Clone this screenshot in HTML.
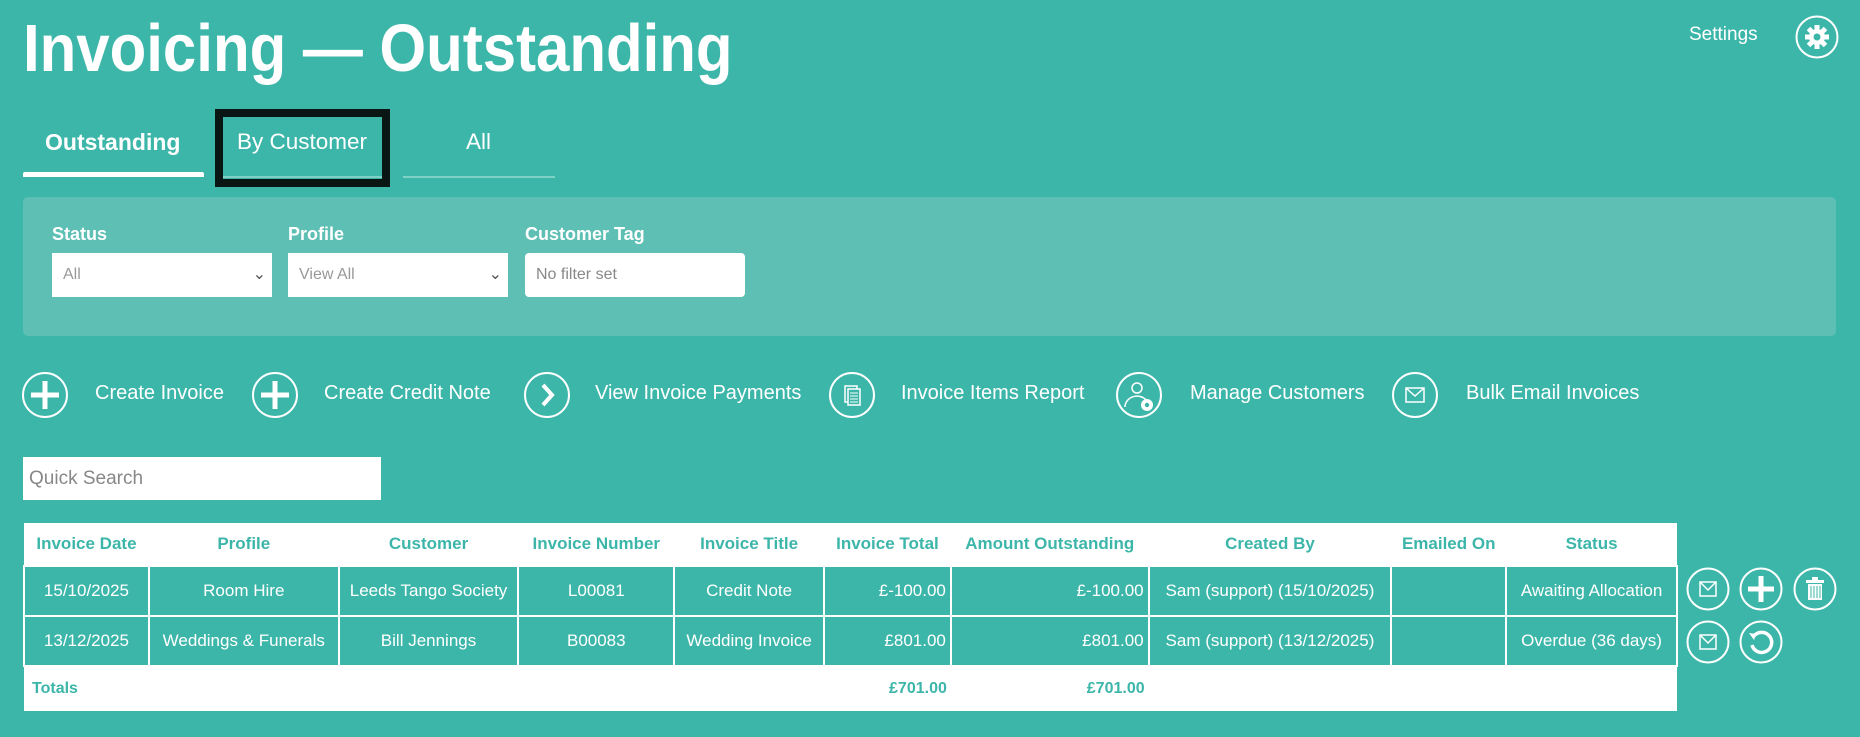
<!DOCTYPE html>
<html><head><meta charset="utf-8"><style>
*{margin:0;padding:0;box-sizing:border-box}
body{width:1860px;height:737px;background:#3db6aa;font-family:"Liberation Sans",sans-serif;color:#fff;position:relative;overflow:hidden}
.a{position:absolute;white-space:nowrap}
h1{position:absolute;left:23px;top:9px;font-size:67px;font-weight:bold;letter-spacing:0;line-height:80px;transform:scaleX(0.895);transform-origin:left top;white-space:nowrap}
.lbl{font-size:18px;font-weight:bold;top:224px}
.sel{position:absolute;top:253px;height:44px;background:#fff;color:#999;font-size:16px;padding:13px 11px}
.act{font-size:20px;top:382px}
svg.ic{position:absolute}
table{position:absolute;left:23px;top:523px;width:1655px;border-collapse:collapse;font-size:17px}
th{background:#fff;color:#3db6aa;font-weight:bold;height:43px;font-size:17px}
td{border:2px solid #fff;height:50px;text-align:center;padding:0 4px}
td.r{text-align:right}
tr.tot td{background:#fff;color:#3db6aa;font-weight:bold;height:45px;border:none;font-size:16px}
</style></head><body>
<h1>Invoicing — Outstanding</h1>
<div class="a" style="left:1689px;top:24px;font-size:19px">Settings</div>
<svg class="ic" style="left:1795px;top:15px" width="44" height="44" viewBox="0 0 44 44"><circle cx="22" cy="22" r="20.5" fill="none" stroke="#fff" stroke-width="2"/><g fill="#fff" transform="translate(22 22)"><circle r="8"/><g id="t"><rect x="-2.5" y="-12" width="5" height="6"/></g><use href="#t" transform="rotate(45)"/><use href="#t" transform="rotate(90)"/><use href="#t" transform="rotate(135)"/><use href="#t" transform="rotate(180)"/><use href="#t" transform="rotate(225)"/><use href="#t" transform="rotate(270)"/><use href="#t" transform="rotate(315)"/></g><circle cx="22" cy="22" r="3.5" fill="#3db6aa"/></svg>

<div class="a" style="left:45px;top:129px;font-size:23px;font-weight:bold">Outstanding</div>
<div class="a" style="left:23px;top:172px;width:181px;height:5px;background:#fff;border-radius:2px 2px 0 0"></div>
<div class="a" style="left:237px;top:129px;font-size:22.5px">By Customer</div>
<div class="a" style="left:466px;top:129px;font-size:22.5px">All</div>
<div class="a" style="left:403px;top:176px;width:152px;height:2px;background:#7fd0c6"></div>
<div class="a" style="left:215px;top:109px;width:175px;height:78px;border:8px solid #0a1614"></div>
<div class="a" style="left:223px;top:176px;width:159px;height:2px;background:#7fd0c6"></div>

<div class="a" style="left:23px;top:197px;width:1813px;height:139px;background:#5ebfb4;border-radius:5px"></div>
<div class="a lbl" style="left:52px">Status</div>
<div class="a lbl" style="left:288px">Profile</div>
<div class="a lbl" style="left:525px">Customer Tag</div>
<div class="sel" style="left:52px;width:220px">All<span style="position:absolute;right:6px;top:11px;color:#555">&#8964;</span></div>
<div class="sel" style="left:288px;width:220px">View All<span style="position:absolute;right:6px;top:11px;color:#555">&#8964;</span></div>
<div class="sel" style="left:525px;width:220px;border-radius:4px;color:#888">No filter set</div>

<svg class="ic" style="left:21px;top:371px" width="48" height="48"><circle cx="24" cy="24" r="22" fill="none" stroke="#fff" stroke-width="2"/><path d="M24 10v28M10 24h28" stroke="#fff" stroke-width="5"/></svg>
<div class="a act" style="left:95px">Create Invoice</div>
<svg class="ic" style="left:251px;top:371px" width="48" height="48"><circle cx="24" cy="24" r="22" fill="none" stroke="#fff" stroke-width="2"/><path d="M24 10v28M10 24h28" stroke="#fff" stroke-width="5"/></svg>
<div class="a act" style="left:324px">Create Credit Note</div>
<svg class="ic" style="left:523px;top:371px" width="48" height="48"><circle cx="24" cy="24" r="22" fill="none" stroke="#fff" stroke-width="2"/><path d="M20 14l9 10-9 10" fill="none" stroke="#fff" stroke-width="4"/></svg>
<div class="a act" style="left:595px">View Invoice Payments</div>
<svg class="ic" style="left:828px;top:371px" width="48" height="48"><circle cx="24" cy="24" r="22" fill="none" stroke="#fff" stroke-width="2"/><rect x="17" y="15" width="12" height="16" fill="none" stroke="#fff" stroke-width="1.5"/><rect x="20" y="18" width="12" height="16" fill="#3db6aa" stroke="#fff" stroke-width="1.5"/><path d="M22 22h8M22 25h8M22 28h8M22 31h8" stroke="#fff"/></svg>
<div class="a act" style="left:901px">Invoice Items Report</div>
<svg class="ic" style="left:1115px;top:371px" width="48" height="48"><circle cx="24" cy="24" r="22" fill="none" stroke="#fff" stroke-width="2"/><circle cx="22" cy="17" r="5" fill="none" stroke="#fff" stroke-width="1.5"/><path d="M10 36a12 11 0 0 1 22-6" fill="none" stroke="#fff" stroke-width="1.5"/><circle cx="32" cy="34" r="6" fill="#fff"/><circle cx="32" cy="34" r="2.2" fill="#3db6aa"/></svg>
<div class="a act" style="left:1190px">Manage Customers</div>
<svg class="ic" style="left:1391px;top:371px" width="48" height="48"><circle cx="24" cy="24" r="22" fill="none" stroke="#fff" stroke-width="2"/><rect x="15" y="17" width="18" height="14" fill="none" stroke="#fff" stroke-width="1.5"/><path d="M15 17l9 8 9-8" fill="none" stroke="#fff" stroke-width="1.5"/></svg>
<div class="a act" style="left:1466px">Bulk Email Invoices</div>

<div class="a" style="left:23px;top:457px;width:358px;height:43px;background:#fff;color:#888;font-size:19px;padding:11px 6px">Quick Search</div>

<table>
<colgroup><col style="width:125px"><col style="width:190px"><col style="width:180px"><col style="width:156px"><col style="width:150px"><col style="width:127px"><col style="width:198px"><col style="width:243px"><col style="width:115px"><col style="width:171px"></colgroup>
<tr><th>Invoice Date</th><th>Profile</th><th>Customer</th><th>Invoice Number</th><th>Invoice Title</th><th>Invoice Total</th><th>Amount Outstanding</th><th>Created By</th><th>Emailed On</th><th>Status</th></tr>
<tr><td>15/10/2025</td><td>Room Hire</td><td>Leeds Tango Society</td><td>L00081</td><td>Credit Note</td><td class="r">£-100.00</td><td class="r">£-100.00</td><td>Sam (support) (15/10/2025)</td><td></td><td>Awaiting Allocation</td></tr>
<tr><td>13/12/2025</td><td>Weddings &amp; Funerals</td><td>Bill Jennings</td><td>B00083</td><td>Wedding Invoice</td><td class="r">£801.00</td><td class="r">£801.00</td><td>Sam (support) (13/12/2025)</td><td></td><td>Overdue (36 days)</td></tr>
<tr class="tot"><td style="text-align:left;padding-left:8px">Totals</td><td></td><td></td><td></td><td></td><td class="r">£701.00</td><td class="r">£701.00</td><td></td><td></td><td></td></tr>
</table>

<svg class="ic" style="left:1686px;top:567px" width="44" height="44"><circle cx="22" cy="22" r="20.5" fill="none" stroke="#fff" stroke-width="2"/><rect x="14" y="15" width="16" height="14" fill="none" stroke="#fff" stroke-width="1.5"/><path d="M14 15l8 8 8-8" fill="none" stroke="#fff" stroke-width="1.5"/></svg>
<svg class="ic" style="left:1739px;top:567px" width="44" height="44"><circle cx="22" cy="22" r="20.5" fill="none" stroke="#fff" stroke-width="2"/><path d="M22 9v26M9 22h26" stroke="#fff" stroke-width="5"/></svg>
<svg class="ic" style="left:1793px;top:567px" width="44" height="44"><circle cx="22" cy="22" r="20.5" fill="none" stroke="#fff" stroke-width="2"/><rect x="13" y="13" width="18" height="3" fill="#fff"/><rect x="19" y="10" width="6" height="3" fill="#fff"/><rect x="15" y="17" width="14" height="16" fill="#fff"/><path d="M18 19v12M21 19v12M24 19v12M27 19v12" stroke="#3db6aa" stroke-width="1"/></svg>
<svg class="ic" style="left:1686px;top:620px" width="44" height="44"><circle cx="22" cy="22" r="20.5" fill="none" stroke="#fff" stroke-width="2"/><rect x="14" y="15" width="16" height="14" fill="none" stroke="#fff" stroke-width="1.5"/><path d="M14 15l8 8 8-8" fill="none" stroke="#fff" stroke-width="1.5"/></svg>
<svg class="ic" style="left:1739px;top:620px" width="44" height="44"><circle cx="22" cy="22" r="20.5" fill="none" stroke="#fff" stroke-width="2"/><path d="M15 16a10 10 0 1 1-2 9" fill="none" stroke="#fff" stroke-width="3.5"/><path d="M10 13l7 1-2 6z" fill="#fff"/></svg>
</body></html>
